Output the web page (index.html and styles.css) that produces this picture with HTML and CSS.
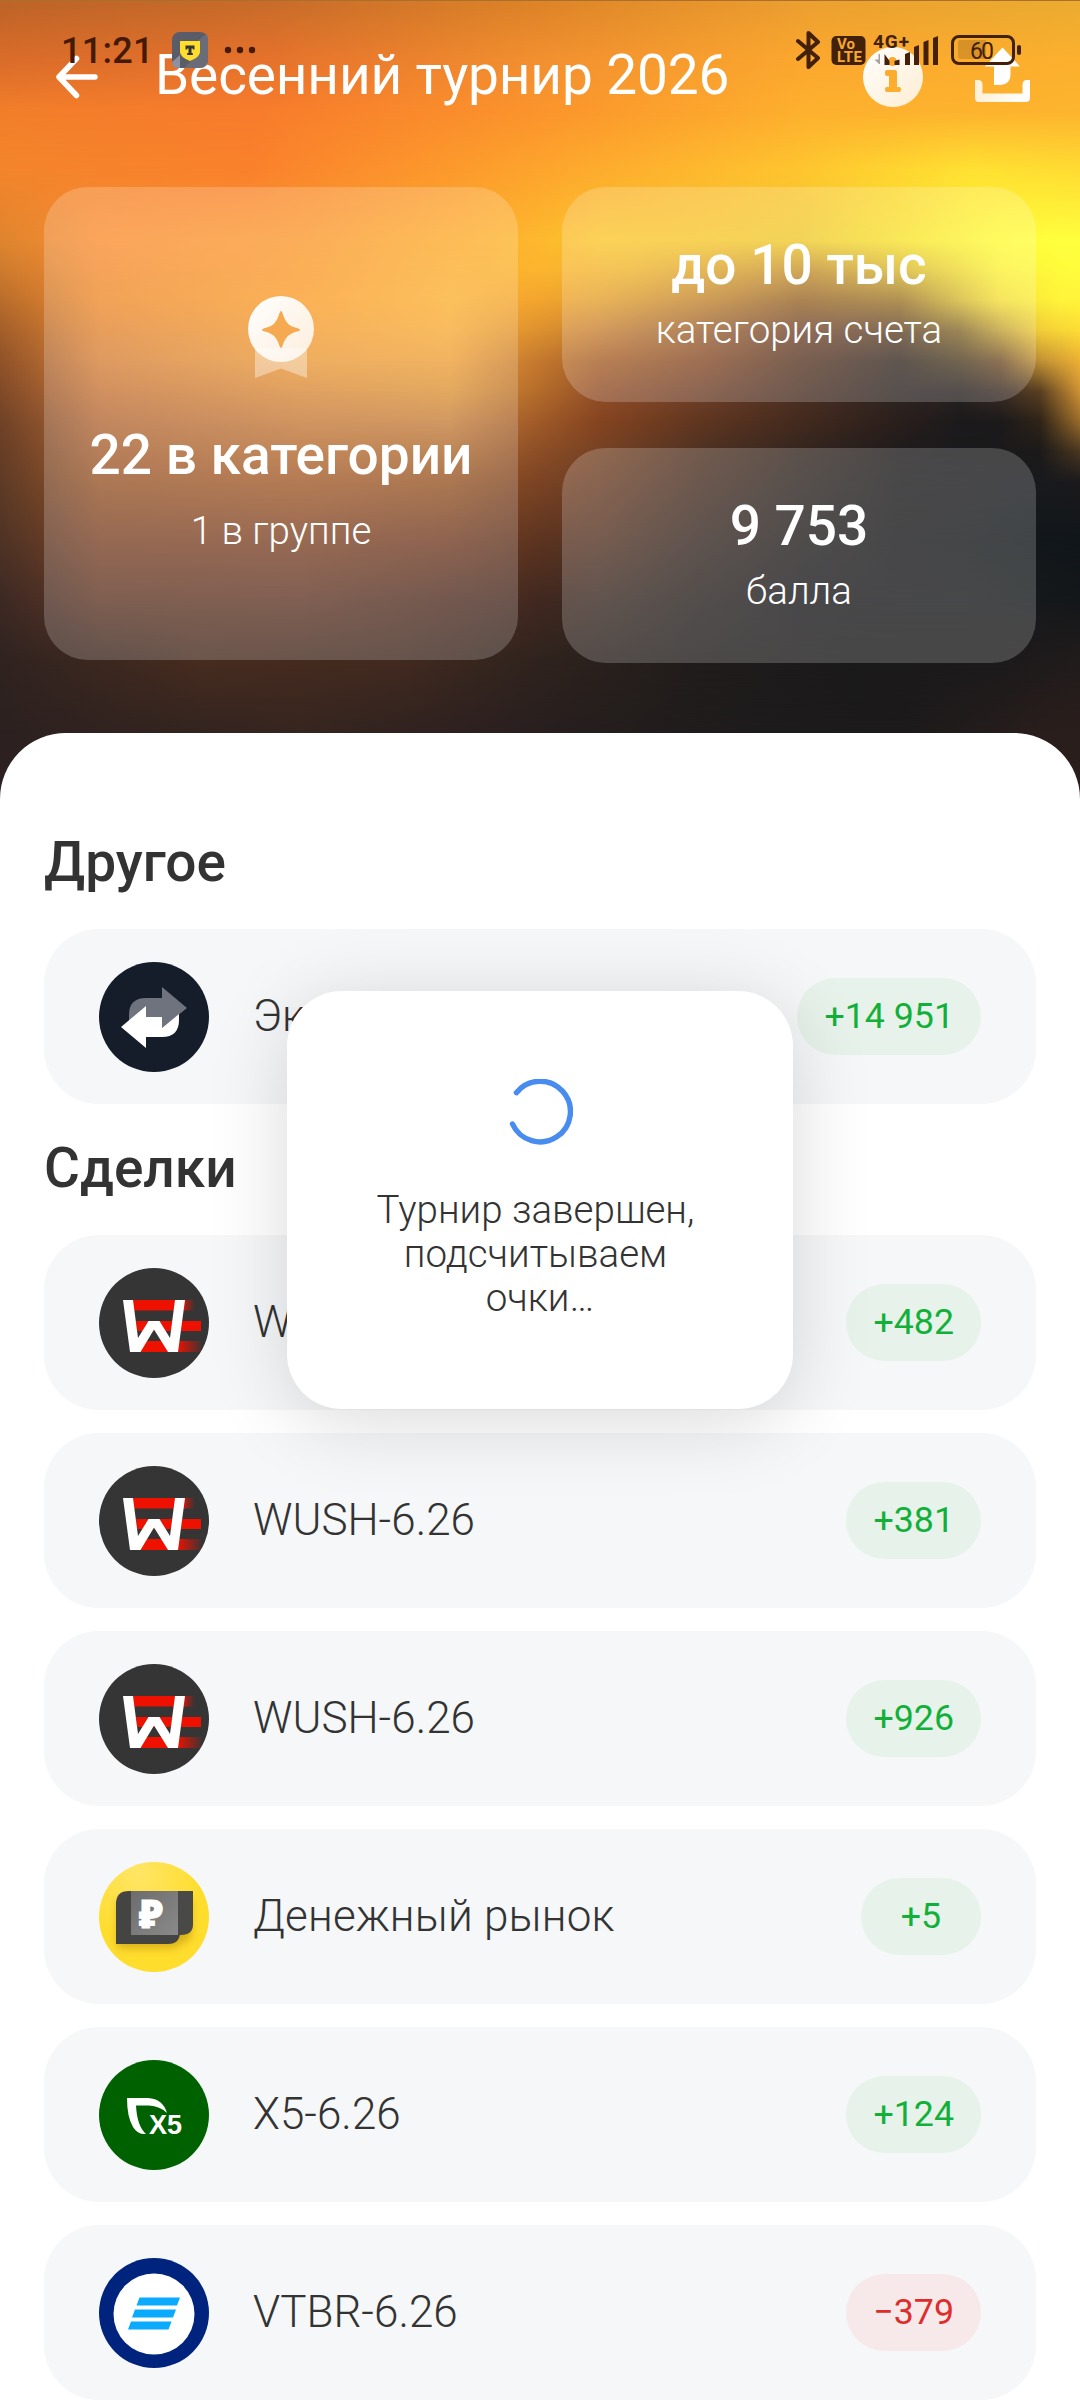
FILE: index.html
```html
<!DOCTYPE html>
<html lang="ru">
<head>
<meta charset="utf-8">
<title>Весенний турнир 2026</title>
<link rel="stylesheet" href="styles.css">
</head>
<body>
<svg class="defs" width="0" height="0" aria-hidden="true">
  <defs>
    <linearGradient id="fadeTop" x1="0" x2="1"><stop offset="0" stop-color="#e10"/><stop offset=".25" stop-color="#e10" stop-opacity=".6"/><stop offset="1" stop-color="#e10" stop-opacity="0"/></linearGradient>
    <linearGradient id="fadeBottom" x1="0" x2="1"><stop offset="0" stop-color="#e10"/><stop offset="1" stop-color="#e10" stop-opacity=".1"/></linearGradient>
    <symbol id="wush" viewBox="0 0 110 110">
      <circle cx="55" cy="55" r="55" fill="#353535"/>
      <path d="M33 32H78V42.500H35z M37 53H102V63H38z M43 73H70V84H40z" fill="#e10"/>
      <path d="M84 32H96V42.500H84z" fill="url(#fadeTop)"/>
      <path d="M79 73H102V84H78z" fill="url(#fadeBottom)"/>
      <path d="M24 32H34L39 70L49.500 53H60.500L71 70L76 32H86L79 84H69L55 61.500L41.500 84H31z" fill="#fff"/>
    </symbol>
    <linearGradient id="white" x1="0" y1="0" x2="1" y2="1"><stop offset="0" stop-color="#fff"/><stop offset="1" stop-color="#fff" stop-opacity=".78"/></linearGradient>
    <linearGradient id="tray" x1="0" y1="0" x2="1" y2="0"><stop offset="0" stop-color="#fff" stop-opacity=".82"/><stop offset="1" stop-color="#fff"/></linearGradient>
  </defs>
</svg>

<div class="screen">
  <div class="backdrop">
    <i class="band b1"></i><i class="band b2"></i><i class="band b3"></i><i class="band b4"></i><i class="band b5"></i><i class="band b6"></i><i class="band b7"></i><i class="band b8"></i><i class="band b9"></i><i class="band b10"></i><i class="band b11"></i><i class="band b12"></i><i class="band b13"></i><i class="band b14"></i><i class="band b15"></i><i class="band b16"></i>
  </div>

  <header class="toolbar">
    <svg class="back" width="44" height="44" viewBox="0 0 44 44"><path d="M21.500 3.500L4 22L21.500 40.500M4 22H40" fill="none" stroke="#fff" stroke-width="5.500" stroke-linecap="round" stroke-linejoin="round"/></svg>
    <h1 class="title">Весенний турнир 2026</h1>
    <svg class="info" width="60" height="60" viewBox="0 0 60 60">
      <path fill="url(#white)" fill-rule="evenodd" d="M30 0a30 30 0 1 1 0 60a30 30 0 1 1 0-60zM29.500 10a4.500 4.500 0 1 0 0 9a4.500 4.500 0 1 0 0-9zM24 23Q22 23 22 25V27Q22 29 24 29H26V40H24Q22 40 22 42V43Q22 45 24 45H36Q38 45 38 43V42Q38 40 36 40H34V25Q34 23 32 23z"/>
    </svg>
    <svg class="share" width="56" height="56" viewBox="0 0 56 56">
      <path fill="url(#tray)" d="M0 33H3Q7.500 33 7.500 38V46.500H47.500V38Q47.500 33 52 33H55V51Q55 55 51 55H4Q0 55 0 51z"/>
      <path fill="#fff" d="M27.500 .5L45 19.500H35.500V27Q35.500 38 24 38H19V19.500H10z"/>
    </svg>
  </header>

  <div class="statusbar">
    <span class="clock">11:21</span>
    <svg class="app" width="36" height="36" viewBox="0 0 36 36"><rect width="36" height="36" rx="8" fill="#5a5d68"/><path d="M36 4V28Q36 36 28 36H12L24 24V10L34 2z" fill="#747784" opacity=".6"/><path d="M0 30L8 23V36H7Q0 36 0 30z" fill="#8c90a0"/><path d="M8 9H28V20Q28 25 18 29Q8 25 8 20z" fill="#ffdd2d"/><path d="M13.500 13.500H22.500V17.500H20.800V16.400H19.500V21H20.800V23H15.200V21H16.500V16.400H15.200V17.500H13.500z" fill="#333"/></svg>
    <svg class="dots" width="32" height="8" viewBox="0 0 32 8"><circle cx="4" cy="4" r="3.200"/><circle cx="16" cy="4" r="3.200"/><circle cx="28" cy="4" r="3.200"/></svg>
    <svg class="sys" width="228" height="40" viewBox="0 0 228 40">
      <path d="M2 11L22 28L12.500 37V3L22 12L2 29" fill="none" stroke="currentColor" stroke-width="4" stroke-linejoin="round" stroke-linecap="round"/>
      <rect x="35.500" y="6" width="34" height="29" rx="5" fill="currentColor"/>
      <text x="41" y="18.500" class="lte">Vo</text><text x="41" y="32" class="lte" textLength="25">LTE</text>
      <text x="77" y="18" class="net" textLength="36">4G+</text>
      <path d="M84 24v10h-1l-4.500-4.500h4v-5.500z" opacity=".35"/>
      <path d="M88.500 24l5 7v4h-5zM98.500 31l5-1.500v5.500h-5zM109 24l5-2v13h-5zM118 17l5-2v20h-5zM127.500 12l5-2v25h-5zM137 8l5-2v29h-5z" fill="currentColor"/>
      <rect x="156.500" y="6.500" width="61" height="27" rx="6.500" fill="none" stroke="currentColor" stroke-width="3"/>
      <path d="M163 10H190V29H165Q162 29 162 26V13z" fill="currentColor" opacity=".18"/>
      <rect x="221" y="15" width="4" height="10" rx="2" fill="currentColor"/>
      <text x="174" y="28.500" class="pct" textLength="24">60</text>
    </svg>
  </div>

  <section class="stats">
    <article class="stat stat--tall">
      <svg class="medal" width="68" height="84" viewBox="0 0 68 84">
        <path d="M8 52H60V82L34 72.500L8 82z" fill="#fff" opacity=".38"/>
        <path fill="url(#white)" d="M34 0a33 33 0 1 1 0 66a33 33 0 1 1 0-66z"/>
        <path fill="#f5a950" d="M34 15Q35 15 36.500 20Q39.500 29.500 48 31.500Q53 32.500 53 34Q53 35 48 36Q39.500 38.500 36.500 47Q35 52 34 52Q33 52 31.500 47Q28.500 38.500 20 36Q15 35 15 34Q15 32.500 20 31.500Q28.500 29.500 31.500 20Q33 15 34 15z"/>
      </svg>
      <strong class="value">22 в категории</strong>
      <span class="caption">1 в группе</span>
    </article>
    <div class="stat-col">
      <article class="stat"><strong class="value">до 10 тыс</strong><span class="caption">категория счета</span></article>
      <article class="stat"><strong class="value">9 753</strong><span class="caption">балла</span></article>
    </div>
  </section>

  <main class="sheet">
    <h2 class="heading">Другое</h2>
    <div class="row">
      <svg class="logo" viewBox="0 0 110 110"><circle cx="55" cy="55" r="55" fill="#151d2a"/>
        <path d="M30 60V53Q30 36 47 36H63V25L88 46L63 66V55H46z" fill="#6f737d"/>
        <path d="M22 65L47 44V55H63V66L80 52V58Q80 75 63 75H47V86z" fill="#fff"/></svg>
      <span class="name">Экспирация</span><span class="pill">+14 951</span>
    </div>
    <h2 class="heading heading--deals">Сделки</h2>
    <div class="list">
      <div class="row"><svg class="logo"><use href="#wush"/></svg><span class="name">WUSH-6.26</span><span class="pill">+482</span></div>
      <div class="row"><svg class="logo"><use href="#wush"/></svg><span class="name">WUSH-6.26</span><span class="pill">+381</span></div>
      <div class="row"><svg class="logo"><use href="#wush"/></svg><span class="name">WUSH-6.26</span><span class="pill">+926</span></div>
      <div class="row">
        <svg class="logo" viewBox="0 0 110 110">
          <defs><radialGradient id="gold" cx=".35" cy=".1" r=".6"><stop offset="0" stop-color="#ffe566"/><stop offset="1" stop-color="#ffdd2d"/></radialGradient>
          <linearGradient id="note" x1="0" x2="1" y1="0" y2="1"><stop offset="0" stop-color="#6c6c6c"/><stop offset="1" stop-color="#8a8a8a"/></linearGradient>
          <filter id="soft" x="-20%" y="-20%" width="140%" height="150%"><feGaussianBlur stdDeviation="4"/></filter></defs>
          <circle cx="55" cy="55" r="55" fill="url(#gold)"/>
          <path d="M18 38H92V76L74 86H18z" fill="#a87800" opacity=".45" filter="url(#soft)"/>
          <path d="M17 42Q17 29 30 29H81V70Q81 82 69 82H17z" fill="#444443"/>
          <path d="M78 29H94V62Q94 73 82 73H78z" fill="#494948"/>
          <rect x="32" y="29" width="47" height="44" fill="url(#note)"/>
          <text x="40" y="66" class="ruble">₽</text>
        </svg>
        <span class="name name--money">Денежный рынок</span><span class="pill">+5</span>
      </div>
      <div class="row">
        <svg class="logo" viewBox="0 0 110 110"><circle cx="55" cy="55" r="55" fill="#006100"/>
          <path d="M28 38H49Q64 39 68 53Q61 46 50 45.500H37Q38 66 47 74Q39 75 34 67Q28 57 28 38z" fill="#fff"/>
          <text x="50" y="74" class="x5" textLength="33" lengthAdjust="spacingAndGlyphs">X5</text></svg>
        <span class="name">X5-6.26</span><span class="pill">+124</span>
      </div>
      <div class="row">
        <svg class="logo" viewBox="0 0 110 110"><circle cx="55" cy="55" r="55" fill="#00247d"/><circle cx="55" cy="56" r="40.500" fill="#fff"/>
          <path d="M40.500 39.500H81L78 47.500H37.500zM36 51.500H77L74 59.500H33zM32 63.500H72.500L69.500 71.500H29z" fill="#0aaaff"/></svg>
        <span class="name">VTBR-6.26</span><span class="pill pill--loss">−379</span>
      </div>
    </div>
  </main>

  <div class="dialog">
    <svg class="spinner" width="66" height="66" viewBox="0 0 66 66"><path d="M9.400 13.700A30.300 30.300 0 1 1 5.500 45" fill="none" stroke="#488cf0" stroke-width="5.400" stroke-linecap="round"/></svg>
    <p class="message"><span class="line line--open">Турнир завершен,</span><span class="line line--open">подсчитываем</span><span class="line">очки…</span></p>
  </div>
</div>
</body>
</html>
```
FILE: styles.css
```css
* { box-sizing: border-box; margin: 0; padding: 0; }
body { width: 1080px; height: 2400px; overflow: hidden; background: #fff; font-family: Roboto, "Noto Sans", sans-serif; color: #333; }
svg { display: block; flex: none; }
.defs { position: absolute; }
.screen { position: relative; width: 1080px; height: 2400px; overflow: hidden; display: flex; flex-direction: column; }

/* Blurred sunset: each band fades into the one above it */
.backdrop { position: absolute; inset: 0 0 auto; height: 820px; border-top: 1px solid #a8702c; background: linear-gradient(90deg, #bf6428, #c96c2a 25%, #df8428 50%, #eda030 75%, #ecac30); }
.band { position: absolute; inset: 0; -webkit-mask-image: linear-gradient(transparent var(--a), #000 var(--b)); mask-image: linear-gradient(transparent var(--a), #000 var(--b)); }
.b1 { --a: 4px; --b: 60px; background: linear-gradient(90deg, #da6c2a, #e6722c 25%, #f29030 50%, #fba82e 75%, #fcb02e); }
.b2 { --a: 60px; --b: 110px; background: linear-gradient(90deg, #f27e2a, #f87c2c 24%, #fb942c 50%, #fdb02e 75%, #fdb42e); }
.b3 { --a: 110px; --b: 170px; background: linear-gradient(90deg, #f3852c, #fa812c 23%, #fda52d 50%, #fec52f 74%, #ffe232 90%, #ffdc32); }
.b4 { --a: 170px; --b: 240px; background: linear-gradient(90deg, #de852e, #fa8f33 100px, #fb9a30 300px, #fdab2e 450px, #fdb82e 540px, #fbc72e 600px, #f7c72e 700px, #efca2f 800px, #f8e22f 900px, #fffc38 1000px, #ffff3e 1060px); }
.b5 { --a: 240px; --b: 270px; background: linear-gradient(90deg, #cc7a2e, #f48d31 100px, #fb9b2e 300px, #fcae30 450px, #fbb42e 540px, #efb42f 630px, #d29c2f 750px, #c48f2f 810px, #d6b52f 900px, #fcf038 1000px, #fffc3c 1070px); }
.b6 { --a: 270px; --b: 300px; background: linear-gradient(90deg, #b86c2c, #ee8c2e 100px, #fa9e2d 300px, #fbb034 450px, #f2a42e 540px, #e2a02f 600px, #c38530 700px, #966429 800px, #9c742a 900px, #d2b634 960px, #f3de38 1000px, #fff33a 1060px); }
.b7 { --a: 300px; --b: 330px; background: linear-gradient(90deg, #a25e2a, #e28634 100px, #f49c32 300px, #f7ab37 450px, #dc902e 540px, #c78035 600px, #9c6333 700px, #724730 800px, #61462b 900px, #84682c 960px, #be9d37 1000px, #f0cc38 1040px, #fddc35); }
.b8 { --a: 330px; --b: 360px; background: linear-gradient(90deg, #905229, #d6813a 100px, #ea9a3a 300px, #eea03a 450px, #c87c2f 530px, #a66029 600px, #884c29 700px, #593825 800px, #382c25 900px, #4f3f25 960px, #714f29 1000px, #c09034 1040px, #ecb034); }
.b9 { --a: 360px; --b: 390px; background: linear-gradient(90deg, #804a28, #c67538 100px, #da8a3a 300px, #dc9438 450px, #b46c2a 540px, #924f29 600px, #714129 700px, #4c3125 800px, #2e2623 900px, #2a2321 960px, #3c2c25 1000px, #5a4022 1040px, #d09234); }
.b10 { --a: 390px; --b: 420px; background: linear-gradient(90deg, #704227, #b46a38 100px, #c67b3a 300px, #c67f3b 450px, #a05a28 540px, #854420 600px, #603620 700px, #442a1e 800px, #2a1f1c 900px, #1c1a1c 960px, #1c1a1c 1000px, #302418 1040px, #9a6c2a); }
.b11 { --a: 420px; --b: 450px; background: linear-gradient(90deg, #663d26, #a66031 100px, #b46a30 300px, #ae6a2f 450px, #8c4e26 540px, #764224 600px, #4f3222 700px, #34261f 800px, #1f1b1c 900px, #1a1a1c 960px, #1c1a1a 1040px, #4c3820); }
.b12 { --a: 450px; --b: 480px; background: linear-gradient(90deg, #5e3b26, #98562a 100px, #a25b2a 300px, #975626 450px, #7c4424 540px, #6a3e26 600px, #482f22 700px, #2e2521 800px, #1c1b1c 900px, #181a1e 1040px, #1c1a1c); }
.b13 { --a: 480px; --b: 540px; background: linear-gradient(90deg, #4e3325, #7c4428 100px, #7e4528 300px, #733d25 450px, #5c3420 540px, #543424 600px, #372923 700px, #242020 800px, #1a1a1c 900px, #10161a); }
.b14 { --a: 540px; --b: 600px; background: linear-gradient(90deg, #3c2924, #5f3726 100px, #613828 300px, #4a2c22 500px, #402820 540px, #3a2a23 600px, #282220 700px, #1c1b1d 800px, #191b1c 960px, #14171a); }
.b15 { --a: 600px; --b: 660px; background: linear-gradient(90deg, #302320, #472c20 200px, #422a20 400px, #2f231e 540px, #201c1b 700px, #1b1a1b 850px, #1c1a1b 1000px, #221c1c); }
.b16 { --a: 660px; --b: 733px; background: linear-gradient(90deg, #2c2120, #36251f 300px, #2c2020 480px, #241e1d 600px, #1e1b1c 750px, #1c1a1b 900px, #2a1e1c 1050px); }

.toolbar { position: relative; height: 187px; padding: 47px 49px 0 55px; display: flex; align-items: flex-start; }
.back { margin-top: 8px; }
.title { margin-left: 56px; margin-top: -5px; width: 654px; font-size: 55px; line-height: 66px; font-weight: 400; letter-spacing: -0.15px; color: #fff; white-space: nowrap; }
.info { margin-left: 54px; }
.share { margin-left: 52px; }

/* System bar drawn over the toolbar */
.statusbar { position: absolute; left: 61px; top: 30px; width: 963px; height: 40px; color: #42200a; display: flex; align-items: center; }
.clock { width: 111px; font-size: 36px; line-height: 42px; padding-top: 2px; letter-spacing: 0.3px; font-weight: 500; color: #451a04; }
.dots { margin-left: 16px; fill: #451a04; }
.sys { margin-left: auto; }
.lte { font: 700 15px Roboto, sans-serif; fill: #f8a832; }
.net { font: 700 19px Roboto, sans-serif; fill: currentColor; }
.pct { font: 400 23px Roboto, sans-serif; fill: currentColor; }

.stats { position: relative; padding: 0 44px; height: 546px; display: flex; align-items: flex-start; gap: 44px; }
.stat { background: rgba(255,255,255,.2); border-radius: 44px; height: 215px; display: flex; flex-direction: column; align-items: center; color: #fff; padding-top: 45px; }
.stat--tall { flex: 1; height: 473px; padding-top: 109px; }
.stat-col { flex: 1; display: flex; flex-direction: column; gap: 46px; }
.value { font-size: 55px; line-height: 66px; font-weight: 500; white-space: nowrap; }
.stat--tall .value { margin-top: 42px; }
.stat--tall .caption { margin-top: 20px; }
.caption { font-size: 38.500px; line-height: 46px; font-weight: 300; margin-top: 9px; }

.sheet { position: relative; flex: 1; background: #fff; border-radius: 66px 66px 0 0; padding: 96px 44px 0; }
.heading { font-size: 55px; line-height: 66px; font-weight: 500; margin-bottom: 34px; }
.heading--deals { margin: 31px 0 34px; }
.list { display: flex; flex-direction: column; gap: 23px; }
.row { height: 175px; border-radius: 55px; background: #f5f7f8; padding: 0 55px; display: flex; align-items: center; }
.logo { width: 110px; height: 110px; }
.name { margin-left: 44px; flex: 1; padding-bottom: 2px; font-size: 44px; font-weight: 300; white-space: nowrap; }
.name--money { letter-spacing: 0.2px; }
.pill { min-width: 120px; height: 77px; border-radius: 39px; padding: 0 27px 1px; display: flex; align-items: center; justify-content: center; font-size: 35.750px; color: #12b03a; background: #e7f3ea; white-space: nowrap; }
.pill--loss { color: #dd2d2d; background: #f7e9e9; }
.ruble { font: 900 39px "Noto Sans", sans-serif; fill: #fff; stroke: #fff; stroke-width: 1px; }
.x5 { font: 700 28px "Liberation Sans", sans-serif; fill: #fff; }

.dialog { position: absolute; left: 287px; top: 991px; width: 506px; height: 418px; border-radius: 55px; background: #fff; box-shadow: 0 12px 80px rgba(0,0,0,.15); display: flex; flex-direction: column; align-items: center; padding-top: 88px; }
.message { margin-top: 43px; font-size: 38.500px; line-height: 44px; font-weight: 300; text-align: center; }
.line { display: block; }
.line--open { padding-right: 9px; }
```
